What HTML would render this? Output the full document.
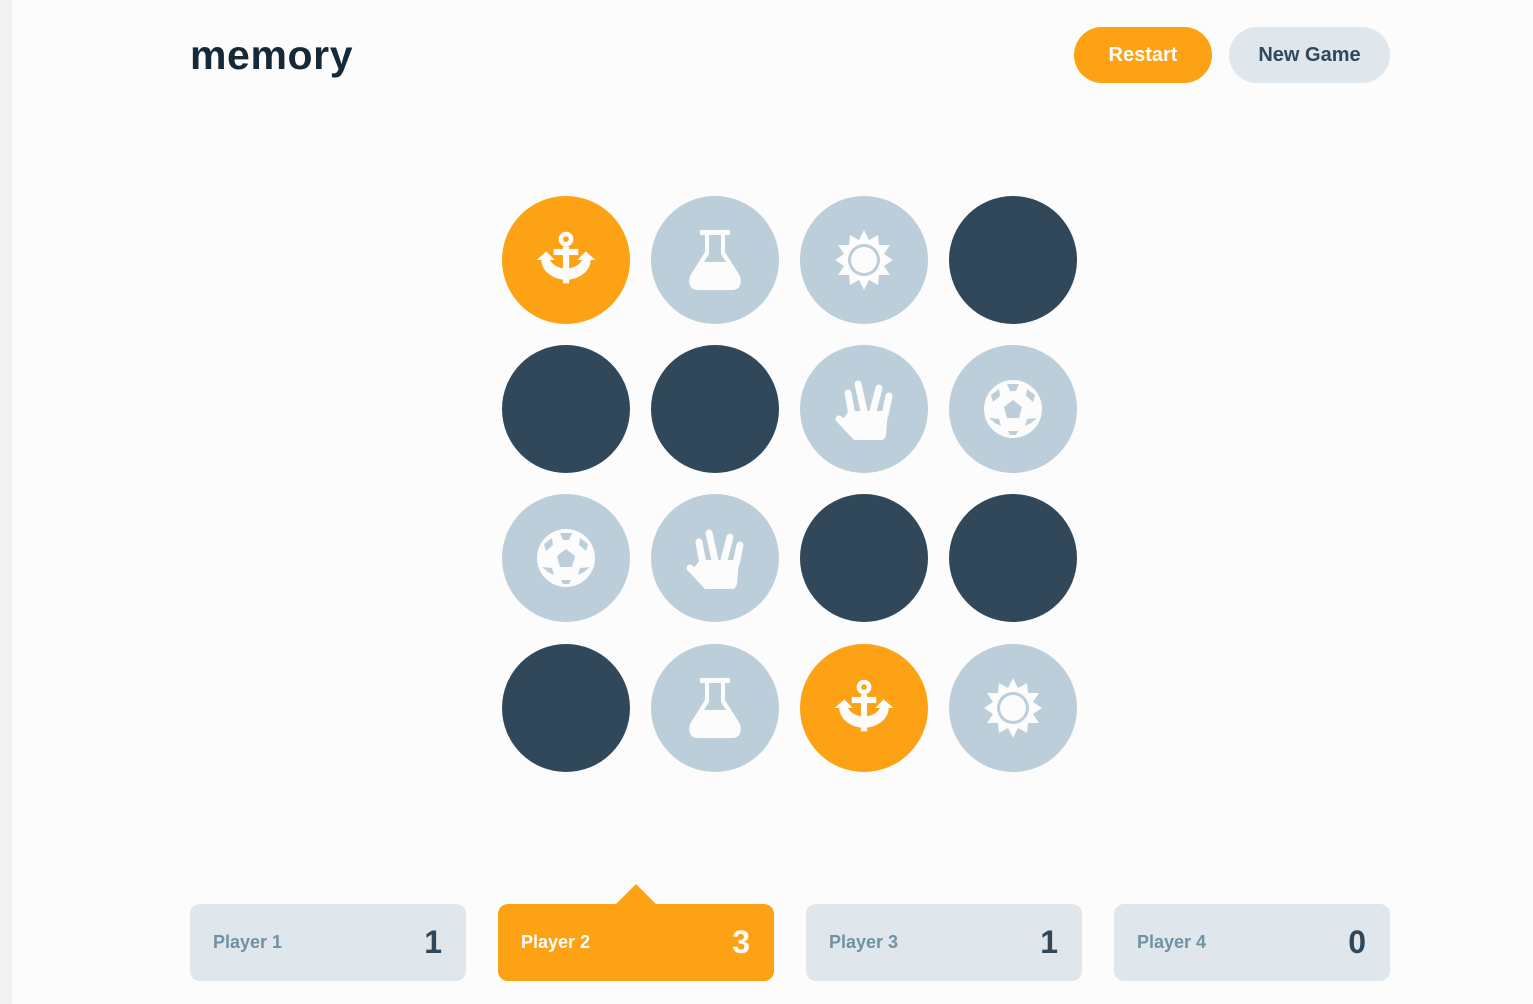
<!DOCTYPE html>
<html><head><meta charset="utf-8"><style>
*{margin:0;padding:0;box-sizing:border-box}
body{width:1533px;height:1004px;background:#fcfcfc;font-family:"Liberation Sans",sans-serif;position:relative;overflow:hidden}
.strip{position:absolute;left:0;top:0;width:12px;height:1004px;background:#f2f2f2}
.logo{position:absolute;left:190px;top:32px;font-size:41px;font-weight:bold;color:#152938;letter-spacing:0.6px}
.btn{position:absolute;top:27px;height:56px;border-radius:28px;font-size:20px;font-weight:bold;display:flex;align-items:center;justify-content:center}
.c{position:absolute;width:128px;height:128px;border-radius:50%}
.o{background:#fda214}.l{background:#bcced9}.d{background:#304859}
.c svg{position:absolute;left:32px;top:32px;width:64px;height:64px}
.p{position:absolute;top:904px;width:276px;height:77px;border-radius:10px;background:#dfe7ec;display:flex;align-items:center;justify-content:space-between;padding:0 24px 0 23px}
.p span{font-size:18px;font-weight:bold;color:#7191a5}
.p b{font-size:32px;color:#304859}
.p.a{background:#fda214}.p.a span,.p.a b{color:#fcfcfc}
</style></head><body>
<div class="strip"></div>
<div class="logo">memory</div>
<div class="btn" style="left:1074px;width:138px;background:#fda214;color:#fcfcfc">Restart</div>
<div class="btn" style="left:1229px;width:161px;background:#dfe7ec;color:#304859">New Game</div>
<svg width="0" height="0" style="position:absolute">
<defs>
<symbol id="anchor" viewBox="-26 -26 52 52"><g fill="#fcfcfc" stroke="none">
<circle cx="0" cy="-17" r="6"/><rect x="-10" y="-9" width="20" height="5"/><rect x="-2.5" y="-11" width="5" height="30"/>
<path d="M-24 0 L-16 -7 L-9 0 L-13 0 A14 11 0 0 0 13 0 L9 0 L16 -7 L24 0 L20 0 A20 16 0 0 1 -20 0 Z"/>
</g><circle cx="0" cy="-17" r="2.3" fill="currentColor"/></symbol>
<symbol id="flask" viewBox="-32 -32 64 64"><path fill="#fcfcfc" fill-rule="evenodd" d="M-15 -30 H15 V-25 H10 V-8 L25 16 Q28 28 19 30 H-19 Q-28 28 -25 16 L-10 -8 V-25 H-15 Z M-6 -25 V-6 L-11 2 H11 L6 -6 V-25 Z"/></symbol>
<symbol id="sun" viewBox="-32 -32 64 64"><path fill="#fcfcfc" d="M0-30 L5-20 L14-25 L15-15 L26-15 L20-6 L29 0 L20 6 L26 15 L15 15 L14 25 L5 20 L0 30 L-5 20 L-14 25 L-15 15 L-26 15 L-20 6 L-29 0 L-20-6 L-26-15 L-15-15 L-14-25 L-5-20Z"/><circle r="16" fill="#bcced9"/><circle r="13" fill="#fcfcfc"/></symbol>
<symbol id="hand" viewBox="-32 -32 64 64"><g fill="none" stroke="#fcfcfc" stroke-linecap="round" stroke-width="7"><line x1="-16" y1="-16" x2="-12" y2="6"/><line x1="-6" y1="-25" x2="0" y2="2"/><line x1="15" y1="-21" x2="9" y2="2"/><line x1="25" y1="-13" x2="21" y2="6"/><line x1="-25" y1="10" x2="-14" y2="21"/></g><path fill="#fcfcfc" d="M-15 2 L24 2 L22 26 Q21 31 17 31 L-10 31 L-25 15 Z"/></symbol>
<symbol id="ball" viewBox="-32 -32 64 64"><circle r="29" fill="#fcfcfc"/><g fill="#bcced9"><path d="M0-9 L9-2 L6 9 L-6 9 L-9-2Z"/><path d="M-6-25 L6-25 L3-18 L-3-18Z"/><path d="M-22-14 L-14-20 L-13-13 L-20-7Z"/><path d="M22-14 L14-20 L13-13 L20-7Z"/><path d="M-24 9 L-18 14 L-12 17 L-14 10Z"/><path d="M24 9 L18 14 L12 17 L14 10Z"/><path d="M-5 22 L5 22 L3 26 L-3 26Z"/></g></symbol>
</defs></svg>
<div class="c o" style="left:502px;top:196px"><svg style="color:#fda214"><use href="#anchor"/></svg></div>
<div class="c l" style="left:651px;top:196px"><svg><use href="#flask"/></svg></div>
<div class="c l" style="left:800px;top:196px"><svg><use href="#sun"/></svg></div>
<div class="c d" style="left:949px;top:196px"></div>
<div class="c d" style="left:502px;top:345px"></div>
<div class="c d" style="left:651px;top:345px"></div>
<div class="c l" style="left:800px;top:345px"><svg><use href="#hand"/></svg></div>
<div class="c l" style="left:949px;top:345px"><svg><use href="#ball"/></svg></div>
<div class="c l" style="left:502px;top:494px"><svg><use href="#ball"/></svg></div>
<div class="c l" style="left:651px;top:494px"><svg><use href="#hand"/></svg></div>
<div class="c d" style="left:800px;top:494px"></div>
<div class="c d" style="left:949px;top:494px"></div>
<div class="c d" style="left:502px;top:644px"></div>
<div class="c l" style="left:651px;top:644px"><svg><use href="#flask"/></svg></div>
<div class="c o" style="left:800px;top:644px"><svg style="color:#fda214"><use href="#anchor"/></svg></div>
<div class="c l" style="left:949px;top:644px"><svg><use href="#sun"/></svg></div>
<div class="p" style="left:190px"><span>Player 1</span><b>1</b></div>
<div style="position:absolute;left:615px;top:884px;width:0;height:0;border-left:21px solid transparent;border-right:21px solid transparent;border-bottom:21px solid #fda214"></div>
<div class="p a" style="left:498px"><span>Player 2</span><b>3</b></div>
<div class="p" style="left:806px"><span>Player 3</span><b>1</b></div>
<div class="p" style="left:1114px"><span>Player 4</span><b>0</b></div>
</body></html>
